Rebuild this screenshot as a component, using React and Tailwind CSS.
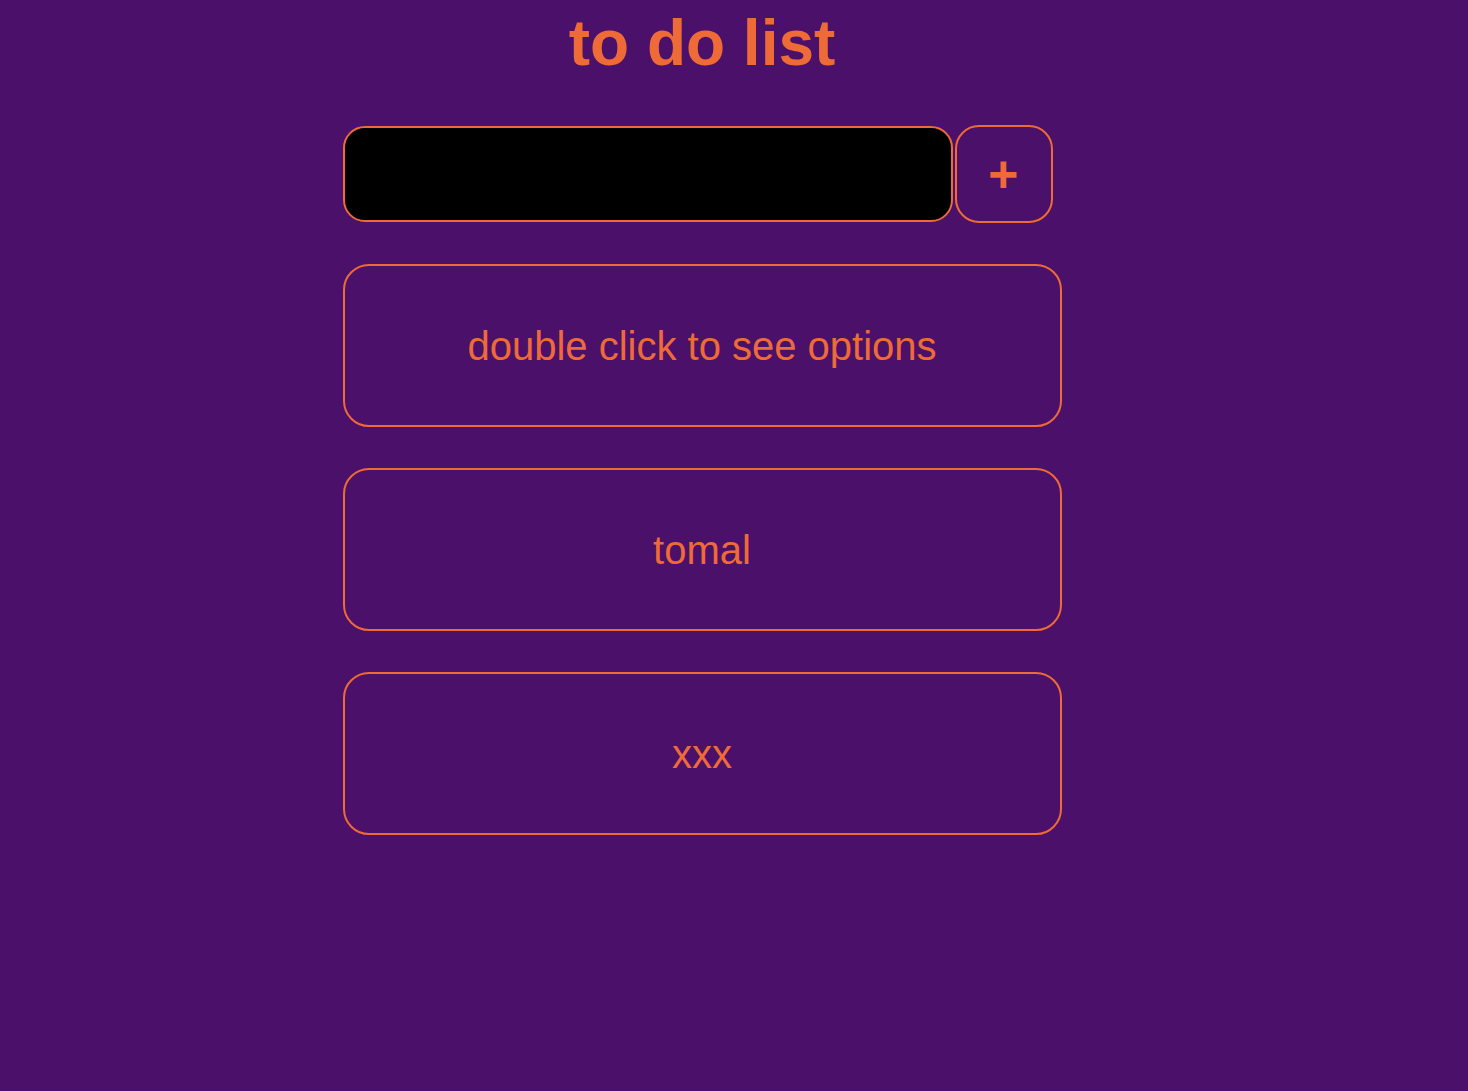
import { useState } from "react";

const todos = ["double click to see options", "tomal", "xxx"];

const App = () => {
  const [text, setText] = useState("");

  return (
    <div
      className="min-h-[1091px] bg-[#4b1069] pr-[64px] pt-[7px]"
      style={{ fontFamily: '"Liberation Sans", Arial, sans-serif' }}
    >
      <h1 className="text-center text-[64px] leading-[72px] font-bold text-[#ee6a36]">to do list</h1>

      <div className="mx-auto mt-[46px] w-[719px]">
        <div className="flex items-center gap-[2px]">
          <input
            value={text}
            onChange={(e) => setText(e.target.value)}
            className="h-[96px] w-[610px] rounded-[22px] border-2 border-[#ee6a36] bg-black px-5 text-[32px] text-[#ee6a36] outline-none"
          />
          <button className="flex h-[98px] w-[98px] items-center justify-center rounded-[24px] border-2 border-[#ee6a36] text-[52px] font-bold leading-none text-[#ee6a36]">
            +
          </button>
        </div>

        <div className="mt-[41px] flex flex-col gap-[41px]">
          {todos.map((todo) => (
            <div
              key={todo}
              className="flex h-[163px] items-center justify-center rounded-[26px] border-2 border-[#ee6a36] text-[40px] text-[#ee6a36]"
            >
              {todo}
            </div>
          ))}
        </div>
      </div>
    </div>
  );
};

export default App;
